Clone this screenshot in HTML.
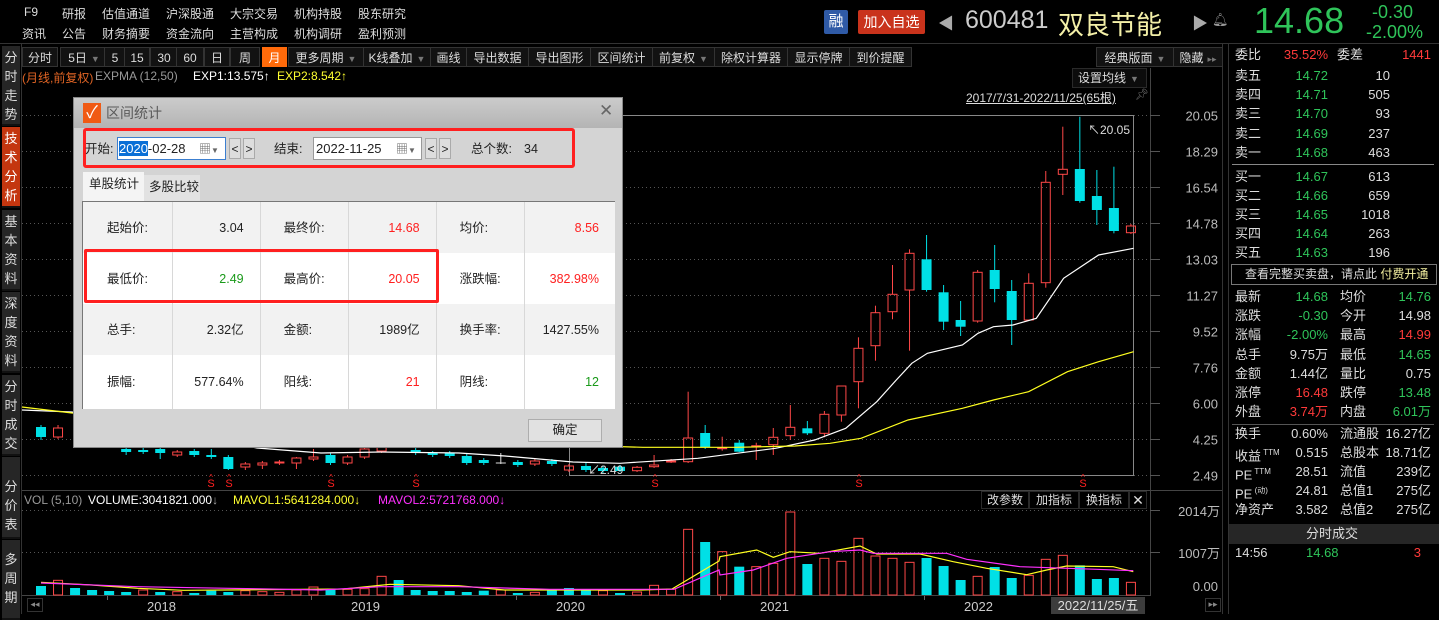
<!DOCTYPE html>
<html><head><meta charset="utf-8">
<style>
*{margin:0;padding:0;box-sizing:border-box}
body{width:1439px;height:614px;background:#000;overflow:hidden;position:relative;font-family:"Liberation Sans","Noto Sans CJK SC",sans-serif;font-size:12px;color:#ddd}
.a{position:absolute;white-space:nowrap}
.side{position:absolute;left:2px;width:18px;background:#262626;color:#ddd;font-size:13px;line-height:19px;text-align:center;border-bottom:2px solid #111}
.tb{position:absolute;top:47px;height:20px;line-height:20px;background:#121212;border:1px solid #333;color:#ddd;text-align:center;font-size:12px}
.dd{color:#777;font-size:9px;margin-left:4px}
.rp{position:absolute;font-size:13px;white-space:nowrap;line-height:18px;height:18px}
.g{color:#2fc45a}.r{color:#ff3a3a}.w{color:#ddd}
#dlg{position:absolute;left:73px;top:97px;width:550px;height:351px;background:#d4d4d4;border:1px solid #888}
#dlg .a{color:#222;line-height:18px}
.cell{position:absolute;font-size:12.5px;color:#222;line-height:18px;height:18px;white-space:nowrap}
</style></head><body>
<svg id="s" width="1439" height="614" style="position:absolute;left:0;top:0"></svg>

<div class="a" style="left:24px;top:5px">F9</div>
<div class="a" style="left:62px;top:5px">研报</div>
<div class="a" style="left:102px;top:5px">估值通道</div>
<div class="a" style="left:166px;top:5px">沪深股通</div>
<div class="a" style="left:230px;top:5px">大宗交易</div>
<div class="a" style="left:294px;top:5px">机构持股</div>
<div class="a" style="left:358px;top:5px">股东研究</div>
<div class="a" style="left:22px;top:25px">资讯</div>
<div class="a" style="left:62px;top:25px">公告</div>
<div class="a" style="left:102px;top:25px">财务摘要</div>
<div class="a" style="left:166px;top:25px">资金流向</div>
<div class="a" style="left:230px;top:25px">主营构成</div>
<div class="a" style="left:294px;top:25px">机构调研</div>
<div class="a" style="left:358px;top:25px">盈利预测</div>

<div class="a" style="left:824px;top:10px;width:24px;height:24px;background:#2f5aa6;border-radius:2px;color:#fff;font-size:15px;line-height:24px;text-align:center">融</div>
<div class="a" style="left:858px;top:10px;width:67px;height:24px;background:#c9331c;border-radius:2px;color:#fff;font-size:14px;line-height:24px;text-align:center">加入自选</div>
<div class="a" style="left:938px;top:10px;color:#aaa;font-size:16px">◀</div>
<div class="a" style="left:965px;top:6px;color:#ccc;font-size:25px">600481</div>
<div class="a" style="left:1058px;top:5px;color:#f4f0a8;font-size:26px">双良节能</div>
<div class="a" style="left:1192px;top:10px;color:#aaa;font-size:16px">▶</div>
<div class="a" style="left:1212px;top:12px;color:#999;font-size:13px">🔔︎</div>
<div class="a g" style="left:1254px;top:0px;font-size:36px">14.68</div>
<div class="a g" style="left:1372px;top:2px;font-size:18px">-0.30</div>
<div class="a g" style="left:1366px;top:22px;font-size:18px">-2.00%</div>

<div class="side" style="top:46px;height:80px;padding-top:2px">分<br>时<br>走<br>势</div>
<div class="side" style="top:127px;height:81px;background:#c4360f;color:#fff;padding-top:2px">技<br>术<br>分<br>析</div>
<div class="side" style="top:210px;height:81px;padding-top:2px">基<br>本<br>资<br>料</div>
<div class="side" style="top:292px;height:81px;padding-top:2px">深<br>度<br>资<br>料</div>
<div class="side" style="top:375px;height:81px;padding-top:2px">分<br>时<br>成<br>交</div>
<div class="side" style="top:457px;height:82px;padding-top:20px">分<br>价<br>表</div>
<div class="side" style="top:540px;height:80px;padding-top:10px">多<br>周<br>期</div>

<div class="tb" style="left:22px;width:36px">分时</div>
<div class="tb" style="left:60px;width:48px">5日<span class="dd">▼</span></div>
<div class="tb" style="left:104px;width:22px">5</div>
<div class="tb" style="left:124px;width:26px">15</div>
<div class="tb" style="left:150px;width:28px">30</div>
<div class="tb" style="left:176px;width:28px">60</div>
<div class="tb" style="left:204px;width:26px">日</div>
<div class="tb" style="left:230px;width:30px">周</div>
<div class="tb" style="left:262px;width:25px;background:#ff6a0a;color:#fff;border-color:#ff6a0a">月</div>
<div class="tb" style="left:288px;width:76px">更多周期<span class="dd">▼</span></div>
<div class="tb" style="left:363px;width:68px">K线叠加<span class="dd">▼</span></div>
<div class="tb" style="left:430px;width:37px">画线</div>
<div class="tb" style="left:466px;width:63px">导出数据</div>
<div class="tb" style="left:528px;width:63px">导出图形</div>
<div class="tb" style="left:590px;width:63px">区间统计</div>
<div class="tb" style="left:652px;width:63px">前复权<span class="dd">▼</span></div>
<div class="tb" style="left:714px;width:74px">除权计算器</div>
<div class="tb" style="left:787px;width:63px">显示停牌</div>
<div class="tb" style="left:849px;width:63px">到价提醒</div>
<div class="tb" style="left:1096px;width:78px">经典版面<span class="dd">▼</span></div>
<div class="tb" style="left:1173px;width:50px">隐藏<span class="dd">▸▸</span></div>

<div class="a" style="left:22px;top:69px;color:#e06424">(月线,前复权)</div>
<div class="a" style="left:95px;top:69px;color:#999">EXPMA (12,50)</div>
<div class="a" style="left:193px;top:69px;color:#fff">EXP1:13.575↑</div>
<div class="a" style="left:277px;top:69px;color:#ffff30">EXP2:8.542↑</div>
<div class="a" style="left:1072px;top:68px;width:75px;height:20px;border:1px solid #2a2a2a;background:#0c0c0c;line-height:19px;padding-left:5px">设置均线<span class="dd">▼</span></div>
<div class="a" style="left:966px;top:89px;text-decoration:underline;color:#ddd">2017/7/31-2022/11/25(65根)</div>
<div class="a" style="left:1135px;top:88px;color:#777;font-size:11px">📌︎</div>
<div class="a" style="left:1088px;top:121px;color:#ddd">↖20.05</div>

<div class="a" style="left:24px;top:493px;color:#999">VOL (5,10)</div>
<div class="a" style="left:88px;top:493px;color:#fff">VOLUME:3041821.000<span style="color:#aaa">↓</span></div>
<div class="a" style="left:233px;top:493px;color:#ffff30">MAVOL1:5641284.000↓</div>
<div class="a" style="left:378px;top:493px;color:#ff30ff">MAVOL2:5721768.000↓</div>
<div class="a" style="left:981px;top:491px;width:48px;height:18px;border:1px solid #2a2a2a;text-align:center;line-height:17px">改参数</div>
<div class="a" style="left:1029px;top:491px;width:50px;height:18px;border:1px solid #2a2a2a;text-align:center;line-height:17px">加指标</div>
<div class="a" style="left:1079px;top:491px;width:50px;height:18px;border:1px solid #2a2a2a;text-align:center;line-height:17px">换指标</div>
<div class="a" style="left:1129px;top:491px;width:18px;height:18px;border:1px solid #2a2a2a;text-align:center;line-height:17px;font-size:14px">✕</div>
<div class="a" style="left:1051px;top:597px;width:94px;height:17px;background:#3c3c3c;color:#ddd;font-size:13px;text-align:center;line-height:17px">2022/11/25/五</div>
<div class="a" style="left:27px;top:598px;width:16px;height:14px;border:1px solid #333;color:#888;font-size:9px;text-align:center">◂◂</div>
<div class="a" style="left:1205px;top:598px;width:16px;height:14px;border:1px solid #333;color:#888;font-size:9px;text-align:center">▸▸</div>

<div id="rp"></div>

<div id="dlg">
 <div class="a" style="left:0;top:0;width:548px;height:30px;background:linear-gradient(#cbcbcb,#b4b4b4)"></div>
 <div class="a" style="left:9px;top:5px;width:18px;height:20px;background:#f05a14;color:#fff;font-size:17px;line-height:20px;text-align:center">✓</div>
 <div class="a" style="left:32px;top:6px;color:#5a5a5a;font-size:14px">区间统计</div>
 <div class="a" style="left:525px;top:4px;color:#666;font-size:17px">✕</div>
 <div class="a" style="left:9px;top:30px;width:492px;height:40px;border:3px solid #ff2020;border-radius:3px"></div>
 <div class="a" style="left:11px;top:42px;font-size:12.5px">开始:</div>
 <div class="a" style="left:43px;top:39px;width:109px;height:23px;background:#fff;border:1px solid #3c7fd0"></div>
 <div class="a" style="left:45px;top:42px;font-size:13px"><span style="background:#0a6fd6;color:#fff">2020</span>-02-28</div>
 <div class="a" style="left:125px;top:42px;font-size:12px;color:#666">▦<span style="font-size:8px">▼</span></div>
 <div class="a" style="left:155px;top:40px;width:12px;height:21px;border:1px solid #aaa;background:#ddd;text-align:center;line-height:20px">&lt;</div>
 <div class="a" style="left:169px;top:40px;width:12px;height:21px;border:1px solid #aaa;background:#ddd;text-align:center;line-height:20px">&gt;</div>
 <div class="a" style="left:200px;top:42px;font-size:12.5px">结束:</div>
 <div class="a" style="left:239px;top:39px;width:109px;height:23px;background:#fff;border:1px solid #999"></div>
 <div class="a" style="left:242px;top:42px;font-size:13px">2022-11-25</div>
 <div class="a" style="left:322px;top:42px;font-size:12px;color:#666">▦<span style="font-size:8px">▼</span></div>
 <div class="a" style="left:351px;top:40px;width:12px;height:21px;border:1px solid #aaa;background:#ddd;text-align:center;line-height:20px">&lt;</div>
 <div class="a" style="left:365px;top:40px;width:12px;height:21px;border:1px solid #aaa;background:#ddd;text-align:center;line-height:20px">&gt;</div>
 <div class="a" style="left:397px;top:42px;font-size:12.5px">总个数:</div>
 <div class="a" style="left:450px;top:42px;font-size:12.5px">34</div>
 <div class="a" style="left:9px;top:74px;width:61px;height:30px;background:#f4f4f4;font-size:12.5px;line-height:24px;padding-left:6px">单股统计</div>
 <div class="a" style="left:70px;top:77px;width:56px;height:27px;background:#e2e2e2;font-size:12.5px;line-height:24px;padding-left:5px">多股比较</div>
 <div class="a" id="tbl" style="left:8px;top:103px;width:533px;height:208px;border:1px solid #777;background:#fff"></div>
 <div class="a" style="left:10px;top:151px;width:355px;height:54px;border:3px solid #ff2020;border-radius:2px"></div>
 <div class="a" style="left:454px;top:321px;width:74px;height:23px;background:#e1e1e1;border:1px solid #adadad;text-align:center;line-height:21px;font-size:12.5px">确定</div>
</div>

<script>
var S=document.getElementById('s'),h='';
function L(x1,y1,x2,y2,c,e){h+='<line x1="'+x1+'" y1="'+y1+'" x2="'+x2+'" y2="'+y2+'" stroke="'+c+'" '+(e||'')+'/>';}
function T(x,y,t,c,a,fs){h+='<text x="'+x+'" y="'+y+'" fill="'+c+'" font-size="'+(fs||12)+'" text-anchor="'+(a||'start')+'" font-family="Liberation Sans,Noto Sans CJK SC,sans-serif">'+t+'</text>';}
L(0,43.5,1439,43.5,'#333');
L(21.5,44,21.5,614,'#333');
L(1150.5,68,1150.5,596,'#444');
L(1222.5,44,1222.5,614,'#333');L(1228.5,44,1228.5,614,'#333');
L(22,490.5,1222,490.5,'#444');
L(22,595.5,1150,595.5,'#444');
var pl=['20.05','18.29','16.54','14.78','13.03','11.27','9.52','7.76','6.00','4.25','2.49'];
for(var i=0;i<11;i++){var y=115+i*36+0.5;L(22,y,1150,y,'#555','stroke-dasharray="1,3"');L(1150,y,1160,y,'#555');T(1218,y+5,pl[i],'#bbb','end',13);}
[510.5,552.5].forEach(function(y){L(22,y,1150,y,'#555','stroke-dasharray="1,3"');L(1150,y,1160,y,'#555');});
T(1220,516,'2014万','#bbb','end',13);T(1220,558,'1007万','#bbb','end',13);T(1218,591,'0.00','#bbb','end',13);
h+='<rect x="569.5" y="115.5" width="564" height="360" fill="none" stroke="#888"/>';
function X(i){return 41+i*17.03;}
var C=[[0,427,437,425,440,'c'],[1,437,428,425,439,'r'],[5,449,452,447,455,'c'],[6,450,452,448,454,'c'],[7,449,453,447,459,'c'],[8,455,452,450,457,'r'],[9,451,455,449,457,'c'],[10,455,457,449,459,'c'],[11,457,469,455,470,'c'],[12,467,464,462,470,'r'],[13,465,463,461,469,'r'],[14,463,462,460,465,'r'],[15,463,458,457,469,'r'],[16,459,457,449,461,'r'],[17,455,463,453,465,'c'],[18,463,457,455,465,'r'],[19,457,449,447,459,'r'],[20,451,447,446,453,'r'],[22,450,453,448,455,'c'],[23,453,455,451,457,'c'],[24,453,456,451,458,'c'],[25,456,463,454,465,'c'],[26,460,463,458,465,'c'],[27,463,463,453,464,'d'],[28,462,465,460,467,'c'],[29,464,461,459,466,'r'],[30,461,464,459,466,'c'],[31,470,466,464,472,'r'],[32,466,470,462,472,'c'],[33,468,471,466,473,'c'],
[34,466.7,471,465,472,'c'],[35,470.7,467.3,466,472,'r'],[36,466.7,465,455,468,'r'],[37,462,461,459,463,'r'],[38,461.7,438,391.7,463,'r'],[39,433,447,425,449,'c'],[40,448.7,447.7,436.7,450.7,'r'],[41,442.7,451.7,440,452,'c'],[42,446.7,445.7,442.7,460,'r'],[43,444.7,437.3,428,455,'r'],[44,435.7,427.3,405,440,'r'],[45,428.3,433.3,421,435,'c'],[46,433.3,414.3,411,437.3,'r'],[47,415,386,386,421.7,'r'],[48,381.7,348.3,337.3,408.3,'r'],[49,345.7,312.7,305.7,360.7,'r'],[50,311.7,294.3,265,319.3,'r'],[51,290,253.3,249.3,350.7,'r'],[52,259.3,290,235,291.7,'c'],[53,292.3,321.7,285,330,'c'],[54,320,326.7,301,336,'c'],[55,321,272.3,270,322.7,'r'],[56,270,289,245,302.3,'c'],[57,291,320,280,345,'c'],[58,320,283.3,273.3,320,'r'],[59,282.7,182.3,171,287.7,'r'],[60,174.3,169.3,126.7,195,'r'],[61,169,201,116.7,202.7,'c'],[62,196,210,170,225,'c'],[63,208,231,166.7,233.3,'c'],[64,232.7,226,224,234,'r']];
C.forEach(function(d){var x=X(d[0]),t=Math.min(d[1],d[2]),b=Math.max(d[1],d[2]),c=d[5];
 if(c=='c'){L(x,d[3],x,d[4],'#00e0e6');h+='<rect x="'+(x-5)+'" y="'+t+'" width="10" height="'+Math.max(b-t,1.5)+'" fill="#00e0e6"/>';}
 else if(c=='r'){L(x,d[3],x,t,'#ff4848');L(x,b,x,d[4],'#ff4848');h+='<rect x="'+(x-4.5)+'" y="'+t+'" width="9" height="'+Math.max(b-t,1)+'" fill="none" stroke="#ff4848"/>';}
 else{L(x,d[3],x,d[4],'#ddd');L(x-5,t,x+5,t,'#ddd');}});
function P(pts,c){h+='<polyline fill="none" stroke="'+c+'" stroke-width="1.2" points="'+pts.map(function(p){return p.join(',')}).join(' ')+'"/>';}
P([[22,410],[72,412],[257,448],[321,453],[381,452],[459,453],[505,456],[573,462],[620,463.3],[697.8,458.3],[775.6,448.3],[814.6,440],[845.7,428.3],[876.8,401.7],[896.3,380],[911.8,363.3],[927.4,353.3],[962.4,345],[978,333.3],[993.5,326.7],[1013,325],[1036.3,318.3],[1063.6,278.3],[1098.6,255],[1133.6,248.3]],'#fff');
P([[22,407],[72,413],[600,446],[643,447.3],[736.7,447.3],[795,446],[830,443.3],[861,438.3],[908,420],[962.4,408.3],[993.5,400],[1028.6,391.7],[1067.5,371.7],[1098.6,361.7],[1133.6,351.7]],'#ffff20');
T(588,474,'↙2.49','#ddd','start',12);
[211,229,331,416,655,859,1083].forEach(function(x){T(x,487,'S','#ff2020','middle',11);T(x,480,'^','#ff2020','middle',8);});
var V=[[438,'c'],[421,'r'],[444,'c'],[450,'c'],[453,'c'],[456,'c'],[450,'r'],[456,'c'],[455,'r'],[459,'c'],[452,'c'],[456,'c'],[452,'r'],[455,'r'],[457,'r'],[450,'r'],[441,'r'],[449,'c'],[448,'r'],[446,'r'],[409,'r'],[420,'c'],[450,'c'],[453,'c'],[453,'c'],[456,'c'],[452,'c'],[450,'r'],[459,'c'],[457,'r'],[451,'c'],[444,'c'],[447,'c'],[452,'r'],[459,'c'],[456,'r'],[436,'r'],[447,'r'],[268,'r'],[306,'c'],[335,'r'],
[380,'c'],[380,'r'],[370,'r'],[216,'r'],[372,'c'],[355,'r'],[364,'r'],[295,'r'],[348,'r'],[355,'r'],[367,'r'],[354,'c'],[378,'c'],[420,'c'],[409,'r'],[381,'c'],[414,'c'],[406,'r'],[358,'r'],[346,'r'],[376,'c'],[417,'c'],[414,'c'],[427,'r']];
V.forEach(function(v,i){var x=X(i),t=440+v[0]/3;if(v[1]=='c')h+='<rect x="'+(x-5)+'" y="'+t+'" width="10" height="'+(595-t)+'" fill="#00e0e6"/>';else h+='<rect x="'+(x-4.5)+'" y="'+t+'" width="9" height="'+(595-t)+'" fill="none" stroke="#ff4848"/>';});
P([[41,582.3],[91.7,585],[137.6,588.3],[183.5,590.3],[344,589],[390,584.3],[458.7,585.7],[504.6,590],[642,590],[672,589],[719,561],[720,556.7],[756.7,550],[773.3,557.3],[790,551.7],[820,553.3],[860,546],[876.7,554],[920,554],[953.3,561.7],[986.7,568.3],[1026.7,574.7],[1046.7,570],[1066.7,566],[1113.3,566.7],[1133.3,571.7]],'#ffff20');
P([[41,583],[137.6,586.7],[229,588.3],[321,590],[380.7,586.7],[458.7,586.7],[550,589.3],[674,589.3],[719,570],[720,575],[753.3,570],[786.7,558.3],[830,551.7],[860,550],[873.3,553.3],[946.7,553.3],[966.7,559.3],[1020,566.7],[1096.7,569.3],[1133.3,570.7]],'#ff30ff');
[[107,'2018'],[311,'2019'],[516,'2020'],[720,'2021'],[924,'2022']].forEach(function(d){L(d[0]+0.5,596,d[0]+0.5,600,'#666');T(d[0]+40,611,d[1],'#ccc','start',13);});
L(1232,164.5,1434,164.5,'#888');h+='<rect x="1231.5" y="264.5" width="205" height="20" fill="none" stroke="#777"/>';
L(1232,424.5,1434,424.5,'#555');
h+='<rect x="1229" y="524" width="210" height="20" fill="#262626"/>';
S.innerHTML=h;
var R='',rp=function(x,y,t,c,al){R+='<div class="rp '+(c||'w')+'" style="'+(al?'right:'+(1439-x)+'px':'left:'+x+'px')+';top:'+(y-9)+'px">'+t+'</div>';};
rp(1235,55,'委比');rp(1328,55,'35.52%','r',1);rp(1337,55,'委差');rp(1431,55,'1441','r',1);
var ask=[['卖五','14.72','10'],['卖四','14.71','505'],['卖三','14.70','93'],['卖二','14.69','237'],['卖一','14.68','463']];
ask.forEach(function(a,i){var y=76+i*19.2;rp(1235,y,a[0]);rp(1328,y,a[1],'g',1);rp(1390,y,a[2],'w',1);});
var bid=[['买一','14.67','613'],['买二','14.66','659'],['买三','14.65','1018'],['买四','14.64','263'],['买五','14.63','196']];
bid.forEach(function(a,i){var y=177+i*19.1;rp(1235,y,a[0]);rp(1328,y,a[1],'g',1);rp(1390,y,a[2],'w',1);});
R+='<div class="rp" style="left:1245px;top:265px;font-size:12px;color:#ddd">查看完整买卖盘，请点此 <span style="color:#f4f0a0">付费开通</span></div>';
var st=[['最新','14.68','g','均价','14.76','g'],['涨跌','-0.30','g','今开','14.98','w'],['涨幅','-2.00%','g','最高','14.99','r'],['总手','9.75万','w','最低','14.65','g'],['金额','1.44亿','c','量比','0.75','w'],['涨停','16.48','r','跌停','13.48','g'],['外盘','3.74万','r','内盘','6.01万','g']];
st.forEach(function(a,i){var y=297+i*19.2;rp(1235,y,a[0]);rp(1328,y,a[1],a[2]=='c'?'':a[2],1);rp(1340,y,a[3]);rp(1431,y,a[4],a[5],1);});
R=R.replace('>1.44亿<',' style="color:#10d8e8">1.44亿<');
var st2=[['换手','0.60%','流通股','16.27亿'],['收益<sup style="font-size:8px"> TTM</sup>','0.515','总股本','18.71亿'],['PE<sup style="font-size:8px"> TTM</sup>','28.51','流值','239亿'],['PE<sup style="font-size:8px"> (动)</sup>','24.81','总值1','275亿'],['净资产','3.582','总值2','275亿']];
st2.forEach(function(a,i){var y=434+i*19.1;rp(1235,y,a[0]);rp(1328,y,a[1],'w',1);rp(1340,y,a[2]);rp(1431,y,a[3],'w',1);});
rp(1306,534,'分时成交');rp(1235,553,'14:56');rp(1306,553,'14.68','g');rp(1421,553,'3','r',1);
document.getElementById('rp').innerHTML=R;
var tb=document.getElementById('tbl'),th='',cx=[0,89,176.6,264.8,352.6,440.5,532],ry=[0,51,102,153,207];
var bg=['#f2f2f2','#fff','#f2f2f2','#fff'];
var data=[['起始价:','3.04','#222','最终价:','14.68','#ff2020','均价:','8.56','#ff2020'],['最低价:','2.49','#1a9a1a','最高价:','20.05','#ff2020','涨跌幅:','382.98%','#ff2020'],['总手:','2.32亿','#222','金额:','1989亿','#222','换手率:','1427.55%','#222'],['振幅:','577.64%','#222','阳线:','21','#ff2020','阴线:','12','#1a9a1a']];
for(var r=0;r<4;r++){th+='<div style="position:absolute;left:0;top:'+ry[r]+'px;width:532px;height:'+(ry[r+1]-ry[r])+'px;background:'+bg[r]+'"></div>';}
for(var c=1;c<6;c++)th+='<div style="position:absolute;left:'+cx[c]+'px;top:0;width:1px;height:207px;background:#d8d8d8"></div>';
data.forEach(function(d,r){var y=ry[r]+(ry[r+1]-ry[r])/2-9;for(var k=0;k<3;k++){th+='<div class="cell" style="left:'+(cx[k*2]+24)+'px;top:'+y+'px">'+d[k*3]+'</div>';th+='<div class="cell" style="right:'+(532-cx[k*2+2]+15)+'px;top:'+y+'px;color:'+d[k*3+2]+'">'+d[k*3+1]+'</div>';}});
tb.innerHTML=th;
</script>
</body></html>
